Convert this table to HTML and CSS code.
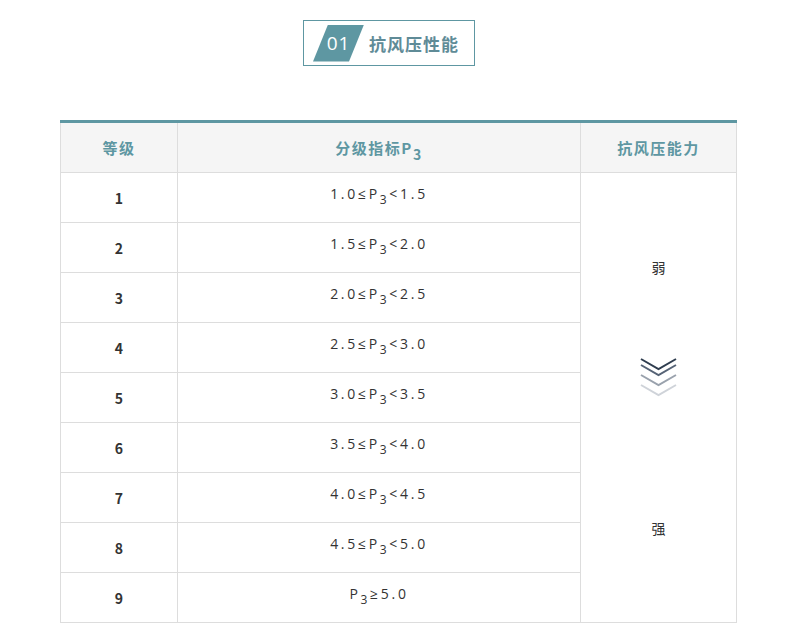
FILE: index.html
```html
<!DOCTYPE html>
<html lang="zh">
<head>
<meta charset="utf-8">
<link rel="stylesheet" href="styles.css">
</head>
<body>
<div class="title-wrap">
  <div class="title-box">
    <span class="num-tag"><span class="num">01</span></span>
    <span class="title-text">抗风压性能</span>
  </div>
</div>
<table class="grade">
  <thead>
    <tr>
      <th class="c1">等级</th>
      <th class="c2">分级指标P<sub>3</sub></th>
      <th class="c3">抗风压能力</th>
    </tr>
  </thead>
  <tbody>
    <tr><td class="lvl">1</td><td class="rng">1.0≤P<sub>3</sub>&lt;1.5</td>
      <td class="cap" rowspan="9">
        <div class="cap-inner">
          <span class="weak">弱</span>
          <svg class="chev" width="37" height="40" viewBox="0 0 37 40">
            <polyline points="1,1 18.5,11 36,1" fill="none" stroke="#2f3d4f" stroke-width="2"/>
            <polyline points="1,7 18.5,17 36,7" fill="none" stroke="#566376" stroke-width="2"/>
            <polyline points="1,17 18.5,27 36,17" fill="none" stroke="#9aa2ad" stroke-width="2"/>
            <polyline points="1,27 18.5,37 36,27" fill="none" stroke="#cfd3d9" stroke-width="2"/>
          </svg>
          <span class="strong">强</span>
        </div>
      </td></tr>
    <tr><td class="lvl">2</td><td class="rng">1.5≤P<sub>3</sub>&lt;2.0</td></tr>
    <tr><td class="lvl">3</td><td class="rng">2.0≤P<sub>3</sub>&lt;2.5</td></tr>
    <tr><td class="lvl">4</td><td class="rng">2.5≤P<sub>3</sub>&lt;3.0</td></tr>
    <tr><td class="lvl">5</td><td class="rng">3.0≤P<sub>3</sub>&lt;3.5</td></tr>
    <tr><td class="lvl">6</td><td class="rng">3.5≤P<sub>3</sub>&lt;4.0</td></tr>
    <tr><td class="lvl">7</td><td class="rng">4.0≤P<sub>3</sub>&lt;4.5</td></tr>
    <tr><td class="lvl">8</td><td class="rng">4.5≤P<sub>3</sub>&lt;5.0</td></tr>
    <tr><td class="lvl">9</td><td class="rng">P<sub>3</sub>≥5.0</td></tr>
  </tbody>
</table>
</body>
</html>
```

FILE: styles.css
```css
html, body {
  margin: 0;
  padding: 0;
  background: #ffffff;
  font-family: "Noto Sans CJK SC", "Noto Sans", sans-serif;
  color: #333333;
}

.title-wrap {
  display: flex;
  padding: 20px 0 0 303px;
}

.title-box {
  display: flex;
  align-items: center;
  box-sizing: border-box;
  width: 172px;
  height: 46px;
  border: 1px solid #5e97a2;
  padding-left: 9px;
}

.num-tag {
  display: flex;
  align-items: center;
  justify-content: center;
  width: 51px;
  height: 37px;
  background: #5e97a2;
  clip-path: polygon(15px 0, 100% 0, calc(100% - 15px) 100%, 0 100%);
}

.num {
  color: #ffffff;
  font-family: "Open Sans", "Noto Sans", sans-serif;
  font-size: 19px;
  letter-spacing: 1px;
}

.title-text {
  margin-left: 5px;
  font-size: 17px;
  font-weight: 700;
  letter-spacing: 1px;
  color: #5f8b97;
}

.grade {
  margin: 54px 0 0 60px;
  width: 673px;
  border-collapse: collapse;
  border-top: 3px solid #5e97a2;
  table-layout: fixed;
}

.grade th, .grade td {
  border: 1px solid #dddddd;
  text-align: center;
  vertical-align: middle;
  padding: 0;
}

.grade thead th {
  border-top: none;
  background: #f5f5f5;
  color: #5e97a2;
  font-size: 15px;
  font-weight: 700;
  letter-spacing: 1.5px;
  height: 49px;
}

.grade .c1 { width: 116px; }
.grade .c2 { width: 402px; }
.grade .c3 { width: 155px; }

.grade thead sub {
  font-size: 14px;
  vertical-align: -6px;
  line-height: 0;
}

.grade tbody tr {
  height: 50px;
}

.lvl {
  font-size: 14px;
  font-weight: 700;
  color: #333333;
}

.grade td.rng {
  font-family: "Open Sans", "DejaVu Sans", sans-serif;
  font-size: 14px;
  letter-spacing: 2.7px;
  color: #333333;
  padding-bottom: 9px;
}

.rng sub {
  font-size: 12px;
  vertical-align: -5px;
  line-height: 0;
}

.cap-inner {
  display: flex;
  flex-direction: column;
  align-items: center;
}

.weak, .strong {
  font-size: 14px;
  color: #333333;
}

.chev {
  display: block;
  margin: 81px 0 120px 0;
}
```
